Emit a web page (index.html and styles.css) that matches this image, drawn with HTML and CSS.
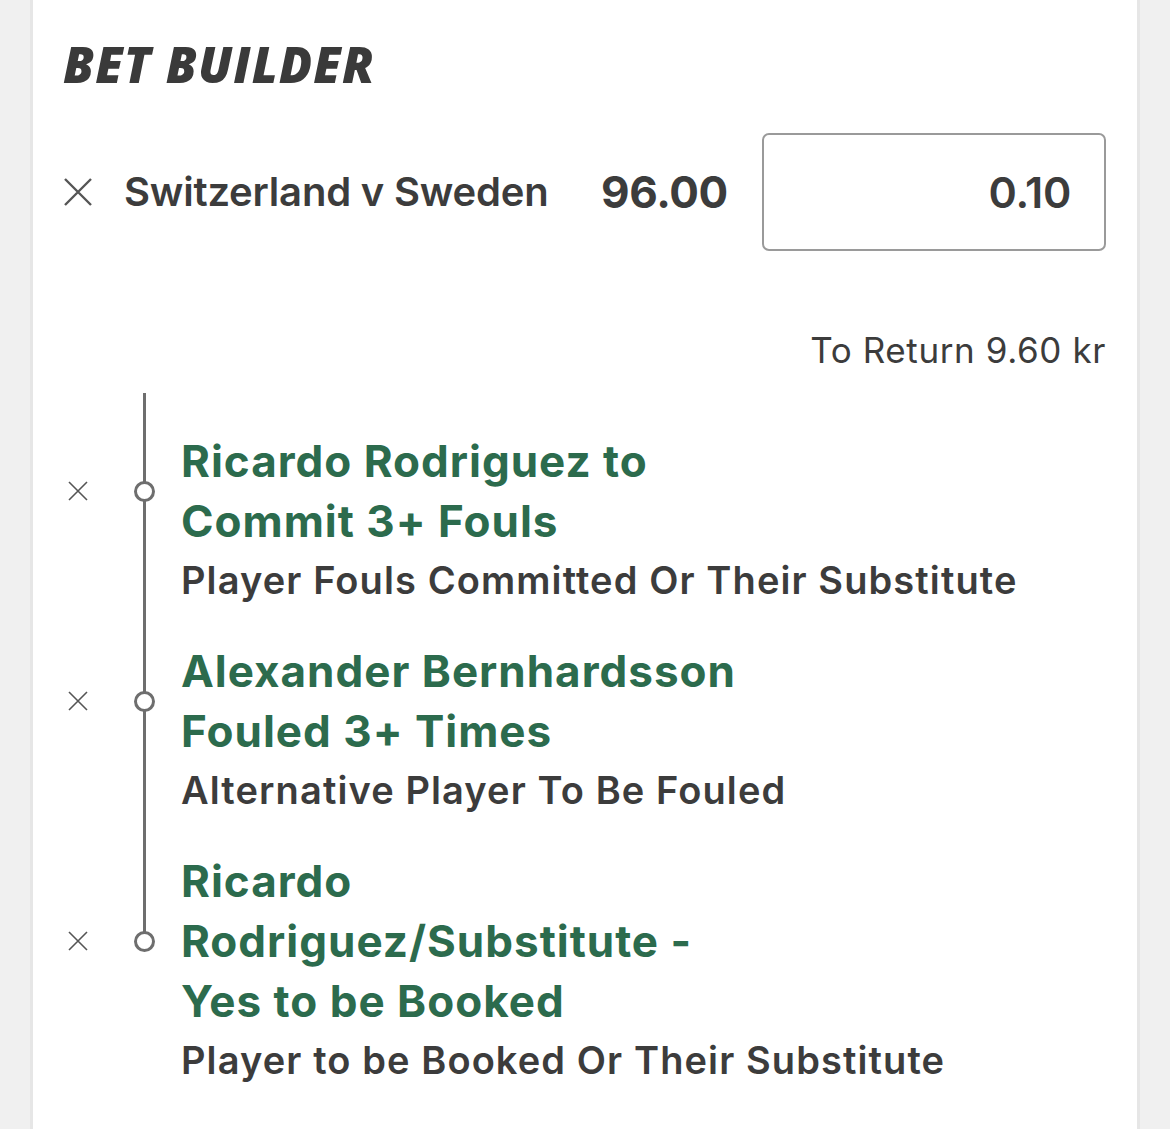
FILE: index.html
```html
<!DOCTYPE html>
<html lang="en">
<head>
<meta charset="utf-8">
<title>Bet Builder</title>
<link rel="stylesheet" href="styles.css">
</head>
<body>
<main class="card">
  <h1 class="title">BET BUILDER</h1>

  <div class="match-row">
    <button class="remove remove-lg" aria-label="Remove">
      <svg viewBox="0 0 30 30" width="30" height="30"><path d="M2 2 L28 28 M28 2 L2 28" stroke="#555" stroke-width="2.4" fill="none"/></svg>
    </button>
    <span class="match-name">Switzerland v Sweden</span>
    <span class="odds">96.00</span>
    <div class="stake">0.10</div>
  </div>

  <div class="to-return">To Return 9.60 kr</div>

  <ol class="legs">
    <li class="leg">
      <span class="leg-x"><svg viewBox="0 0 20 20" width="20" height="20"><path d="M1 1 L19 19 M19 1 L1 19" stroke="#555" stroke-width="1.6" fill="none"/></svg></span>
      <span class="rail"></span>
      <span class="dot"></span>
      <div class="leg-title">Ricardo Rodriguez to<br>Commit 3+ Fouls</div>
      <div class="leg-sub">Player Fouls Committed Or Their Substitute</div>
    </li>
    <li class="leg">
      <span class="leg-x"><svg viewBox="0 0 20 20" width="20" height="20"><path d="M1 1 L19 19 M19 1 L1 19" stroke="#555" stroke-width="1.6" fill="none"/></svg></span>
      <span class="rail"></span>
      <span class="dot"></span>
      <div class="leg-title">Alexander Bernhardsson<br>Fouled 3+ Times</div>
      <div class="leg-sub">Alternative Player To Be Fouled</div>
    </li>
    <li class="leg leg-last">
      <span class="leg-x"><svg viewBox="0 0 20 20" width="20" height="20"><path d="M1 1 L19 19 M19 1 L1 19" stroke="#555" stroke-width="1.6" fill="none"/></svg></span>
      <span class="rail"></span>
      <span class="dot"></span>
      <div class="leg-title">Ricardo<br>Rodriguez/Substitute -<br>Yes to be Booked</div>
      <div class="leg-sub">Player to be Booked Or Their Substitute</div>
    </li>
  </ol>
</main>
</body>
</html>
```

FILE: styles.css
```css
* { box-sizing: border-box; }

html, body {
  margin: 0;
  padding: 0;
}

body {
  background: #f0f0f0;
  font-family: Inter, "Noto Sans", sans-serif;
  color: #3c3c3c;
}

.card {
  margin: 0 30px;
  min-height: 1129px;
  background: #ffffff;
  border-left: 3px solid #e6e6e6;
  border-right: 3px solid #e6e6e6;
  padding: 34px 31px 0 30px;
}

.title {
  margin: 0;
  font-family: "Open Sans", sans-serif;
  font-style: italic;
  font-weight: 800;
  font-size: 49px;
  line-height: 60px;
  letter-spacing: 1.1px;
  color: #3a3a3a;
}

.match-row {
  display: flex;
  align-items: center;
  margin-top: 39px;
  height: 117px;
}

.remove {
  border: 0;
  background: none;
  padding: 0;
  display: flex;
}

.match-name {
  margin-left: 31px;
  font-size: 40px;
  font-weight: 600;
  letter-spacing: -0.2px;
  color: #3c3c3c;
}

.odds {
  margin-left: auto;
  font-size: 44px;
  font-weight: 700;
  letter-spacing: -0.3px;
  color: #3c3c3c;
}

.stake {
  margin-left: 34px;
  width: 344px;
  height: 118px;
  border: 2px solid #9a9a9a;
  border-radius: 7px;
  display: flex;
  align-items: center;
  justify-content: flex-end;
  padding-right: 33px;
  font-size: 43px;
  font-weight: 600;
  letter-spacing: -0.3px;
  color: #3c3c3c;
}

.to-return {
  margin-top: 80px;
  text-align: right;
  font-size: 35px;
  line-height: 40px;
  font-weight: 400;
  letter-spacing: 0.6px;
  color: #3c3c3c;
}

.legs {
  list-style: none;
  margin: 23px 0 0;
  padding: 0;
}

.leg {
  display: grid;
  grid-template-columns: 30px 67px 1fr;
  grid-template-rows: auto auto;
  column-gap: 0;
  padding-top: 38px;
}

.leg + .leg {
  padding-top: 32px;
}

.leg-x {
  grid-column: 1;
  grid-row: 1;
  align-self: center;
  justify-self: center;
  display: flex;
}

.rail {
  grid-column: 2;
  grid-row: 1 / 3;
  margin-top: -38px;
  justify-self: end;
  margin-right: 14px;
  width: 3px;
  background: #6e6e6e;
}

.leg + .leg .rail {
  margin-top: -32px;
}

.leg-last .rail {
  grid-row: 1;
  align-self: start;
  height: calc(50% + 32px);
}

.dot {
  grid-column: 2;
  grid-row: 1;
  align-self: center;
  justify-self: end;
  margin-right: 5px;
  width: 21px;
  height: 21px;
  border: 3px solid #6e6e6e;
  border-radius: 50%;
  background: #fff;
  z-index: 1;
}

.leg-title {
  grid-column: 3;
  grid-row: 1;
  padding-left: 21px;
  font-size: 44px;
  line-height: 60px;
  font-weight: 700;
  letter-spacing: 1px;
  color: #2c6b4d;
}

.leg-sub {
  grid-column: 3;
  grid-row: 2;
  padding-left: 21px;
  font-size: 38px;
  line-height: 58px;
  font-weight: 600;
  letter-spacing: 1.1px;
  color: #3c3c3c;
}
```
